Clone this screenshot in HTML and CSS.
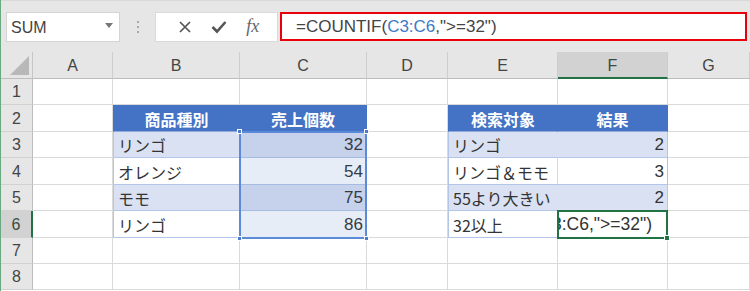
FILE: index.html
```html
<!DOCTYPE html>
<html lang="ja">
<head>
<meta charset="utf-8">
<title>COUNTIF</title>
<link rel="stylesheet" href="styles.css">
</head>
<body>
<div class="app">
  <div class="topbar">
    <div class="namebox">
      <span class="name">SUM</span>
      <svg class="dd" width="8" height="5" viewBox="0 0 8 5"><path d="M0 0 H8 L4 5 Z" fill="#777"/></svg>
    </div>
    <div class="sep"><span></span><span></span><span></span></div>
    <div class="btns">
      <svg width="14" height="14" viewBox="0 0 14 14"><path d="M2 2 L12 12 M12 2 L2 12" stroke="#555" stroke-width="1.7" fill="none"/></svg>
      <svg width="16" height="14" viewBox="0 0 16 14"><path d="M1.5 7 L6 11.5 L14.5 2" stroke="#555" stroke-width="2.6" fill="none" stroke-linejoin="miter"/></svg>
      <span class="fx">fx</span>
    </div>
    <div class="formula"><span>=COUNTIF(</span><span class="ref">C3:C6</span><span>,"&gt;=32")</span></div>
  </div>

  <div class="sheet">
    <div class="corner"><span class="tri"></span></div>
    <div class="ch">A</div><div class="ch">B</div><div class="ch">C</div><div class="ch">D</div><div class="ch">E</div><div class="ch chsel">F</div><div class="ch">G</div>

    <div class="rh">1</div>
    <div class="c"></div><div class="c"></div><div class="c"></div><div class="c"></div><div class="c"></div><div class="c"></div><div class="c"></div>

    <div class="rh">2</div>
    <div class="c"></div><div class="c th tl">商品種別</div><div class="c th tr">売上個数</div><div class="c"></div><div class="c th tl">検索対象</div><div class="c th tr">結果</div><div class="c"></div>

    <div class="rh">3</div>
    <div class="c"></div><div class="c band tl">リンゴ</div><div class="c band tr num at-c3">32</div><div class="c"></div><div class="c band tl">リンゴ</div><div class="c band tr num">2</div><div class="c"></div>

    <div class="rh">4</div>
    <div class="c"></div><div class="c plain tl">オレンジ</div><div class="c plain tr num at-c4">54</div><div class="c"></div><div class="c plain tl">リンゴ＆モモ</div><div class="c plain tr num">3</div><div class="c"></div>

    <div class="rh">5</div>
    <div class="c"></div><div class="c band tl">モモ</div><div class="c band tr num at-c5">75</div><div class="c"></div><div class="c band tl">55より大きい</div><div class="c band tr num">2</div><div class="c"></div>

    <div class="rh rhsel">6</div>
    <div class="c"></div><div class="c plain tl">リンゴ</div><div class="c plain tr num at-c6">86</div><div class="c"></div><div class="c plain tl">32以上</div><div class="c plain tr edit at-f6"><span>=COUNTIF(C3:C6,"&gt;=32")</span></div><div class="c"></div>

    <div class="rh">7</div>
    <div class="c"></div><div class="c"></div><div class="c"></div><div class="c"></div><div class="c"></div><div class="c"></div><div class="c"></div>

    <div class="rh">8</div>
    <div class="c"></div><div class="c"></div><div class="c"></div><div class="c"></div><div class="c"></div><div class="c"></div><div class="c"></div>

    <div class="selrange">
      <span class="h h-tl"></span><span class="h h-tr"></span><span class="h h-bl"></span><span class="h h-br"></span>
    </div>
    <div class="active"><span class="ah"></span></div>
  </div>
</div>
</body>
</html>
```

FILE: styles.css
```css
html, body {
  margin: 0;
  padding: 0;
  background: #ffffff;
}
body {
  width: 750px;
  height: 291px;
  overflow: hidden;
  font-family: "Liberation Sans", "Noto Sans CJK JP", sans-serif;
  color: #333;
}
.app {
  border-left: 1px solid #6aa882;
  height: 291px;
  background: #fff;
}
.topbar {
  display: flex;
  align-items: flex-start;
  height: 52px;
  box-sizing: border-box;
  padding: 11px 0 0 5px;
  background: #e6e6e6;
  border-top: 1px solid #d9d9d9;
}
.namebox {
  width: 114px;
  height: 30px;
  box-sizing: border-box;
  background: #fff;
  border: 1px solid #d4d4d4;
  display: flex;
  align-items: center;
  justify-content: space-between;
  padding: 0 6px 0 4px;
}
.name {
  font-size: 16px;
  color: #444;
  padding-top: 2px;
}
.dd { margin-top: -3px; }
.sep {
  width: 35px;
  height: 30px;
  display: flex;
  flex-direction: column;
  align-items: center;
  justify-content: center;
  gap: 3px;
}
.sep span {
  width: 2px;
  height: 2px;
  background: #a8a8a8;
}
.btns {
  width: 123px;
  height: 30px;
  box-sizing: border-box;
  background: #fff;
  border: 1px solid #dadada;
  display: flex;
  align-items: center;
  justify-content: space-around;
  padding: 0 8px 0 12px;
}
.fx {
  font-family: "Liberation Serif", serif;
  font-style: italic;
  font-size: 18px;
  color: #666;
  margin-top: -2px;
}
.formula {
  margin-left: 2px;
  width: 467px;
  height: 29px;
  box-sizing: border-box;
  border: 2px solid #e8000b;
  background: #fff;
  display: flex;
  align-items: center;
  padding-left: 14px;
  font-size: 17px;
  color: #444;
  white-space: pre;
}
.formula .ref { color: #3d7bc8; }

.sheet {
  display: grid;
  grid-template-columns: 32px 80px 127px 127px 81px 110px 110px 82px;
  grid-template-rows: 27px 26px 27px 26px 27px 26px 27px 26px 26px;
  font-size: 16px;
}
.sheet > div {
  box-sizing: border-box;
}
.at-c3 { grid-row: 4; grid-column: 4; }
.at-c4 { grid-row: 5; grid-column: 4; }
.at-c5 { grid-row: 6; grid-column: 4; }
.at-c6 { grid-row: 7; grid-column: 4; }
.at-f6 { grid-row: 7; grid-column: 7; }
.corner {
  background: #e6e6e6;
  border-right: 1px solid #c6c6c6;
  border-bottom: 1px solid #bdbdbd;
  display: flex;
  align-items: flex-end;
  justify-content: flex-end;
  padding: 0 3px 3px 0;
}
.tri {
  width: 0;
  height: 0;
  border-left: 19px solid transparent;
  border-bottom: 19px solid #b8b8b8;
}
.ch {
  background: #e6e6e6;
  border-right: 1px solid #cdcdcd;
  border-bottom: 1px solid #bdbdbd;
  display: flex;
  align-items: center;
  justify-content: center;
  font-size: 16px;
  color: #444;
  padding-top: 2px;
}
.chsel {
  background: #d2d2d2;
  border-bottom: 2px solid #217346;
  color: #3b4a40;
}
.rh {
  background: #e6e6e6;
  border-right: 1px solid #bdbdbd;
  border-bottom: 1px solid #d2d2d2;
  display: flex;
  align-items: center;
  justify-content: center;
  font-size: 16px;
  color: #444;
  padding-top: 1px;
}
.rhsel {
  background: #d2d2d2;
  border-right: 2px solid #217346;
  color: #3b4a40;
}
.c {
  border-right: 1px solid #dadada;
  border-bottom: 1px solid #dadada;
  display: flex;
  align-items: center;
  padding: 1px 4px 0 4px;
  white-space: nowrap;
  overflow: hidden;
  font-family: "Noto Sans CJK JP", "Liberation Sans", sans-serif;
  font-size: 16px;
  color: #333;
}
.num {
  justify-content: flex-end;
  font-family: "Liberation Sans", sans-serif;
  font-size: 17px;
  padding-right: 3px;
}
.th {
  background: #4472c4;
  color: #fff;
  font-weight: bold;
  justify-content: center;
  border-right-color: #4472c4;
  border-bottom-color: #8eaadb;
}
.band {
  background: #d9e1f2;
  border-right-color: #d9e1f2;
  border-bottom-color: #b4c6e7;
}
.plain {
  border-bottom-color: #b4c6e7;
}
.tl {
  border-left: 1px solid #b4c6e7;
}
.th.tl { border-left-color: #4472c4; }
.tr {
  border-right: 1px solid #b4c6e7;
}
.th.tr { border-right-color: #4472c4; }
.edit {
  justify-content: flex-end;
  padding-right: 15px;
  font-family: "Liberation Sans", sans-serif;
  font-size: 17.5px;
  color: #333;
}
.edit span { flex: none; }

.selrange {
  grid-column: 4;
  grid-row: 4 / 8;
  margin: -1px 0 -1px -1px;
  border: 2px solid #5b8bd8;
  background: rgba(68, 114, 196, 0.13);
  position: relative;
  pointer-events: none;
}
.h {
  position: absolute;
  width: 5px;
  height: 5px;
  background: #4a7bd0;
  border: 1px solid #fff;
  box-sizing: border-box;
}
.h-tl { left: -4px; top: -4px; }
.h-tr { right: -4px; top: -4px; }
.h-bl { left: -4px; bottom: -4px; }
.h-br { right: -4px; bottom: -4px; }
.active {
  grid-column: 7;
  grid-row: 7;
  margin: -1px 0 -1px -1px;
  border: 2px solid #217346;
  position: relative;
  pointer-events: none;
}
.ah {
  position: absolute;
  right: -4px;
  bottom: -4px;
  width: 6px;
  height: 6px;
  background: #217346;
  border: 1px solid #fff;
  box-sizing: border-box;
}
```
